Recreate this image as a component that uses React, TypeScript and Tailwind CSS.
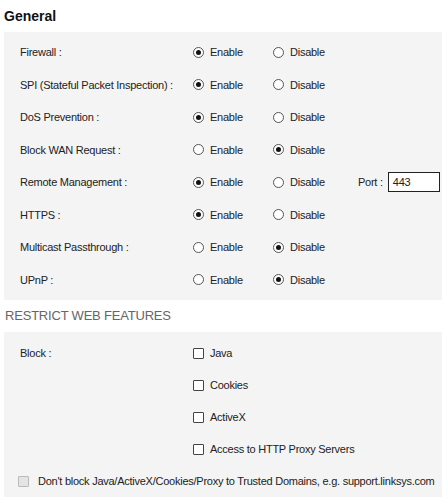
import React from "react";

type Row = { label: string; on: boolean; port?: string };

const rows: Row[] = [
  { label: "Firewall :", on: true },
  { label: "SPI (Stateful Packet Inspection) :", on: true },
  { label: "DoS Prevention :", on: true },
  { label: "Block WAN Request :", on: false },
  { label: "Remote Management :", on: true, port: "443" },
  { label: "HTTPS :", on: true },
  { label: "Multicast Passthrough :", on: false },
  { label: "UPnP :", on: false },
];

const Radio = ({ checked }: { checked: boolean }) => (
  <span className="w-[11px] h-[11px] rounded-full border border-[#555] bg-white flex items-center justify-center shrink-0">
    {checked && <span className="w-[5px] h-[5px] rounded-full bg-[#111]" />}
  </span>
);

const Check = ({ disabled }: { disabled?: boolean }) => (
  <span
    className={
      disabled
        ? "w-[11px] h-[11px] rounded-[1px] border border-[#bbb] bg-[#e4e4e4] shrink-0"
        : "w-[11px] h-[11px] rounded-[1px] border border-[#444] bg-white shrink-0"
    }
  />
);

export default function App() {
  return (
    <div className="w-[446px] h-[500px] bg-white text-[#222] text-[11px] tracking-[-0.25px] whitespace-nowrap overflow-hidden" style={{ fontFamily: '"Liberation Sans", Arial, sans-serif' }}>
      <h1 className="px-1 h-8 flex items-center text-[14px] font-bold tracking-normal text-[#111]">General</h1>

      {/* radio settings */}
      <div className="mx-1 w-[438px] bg-[#f4f4f4] py-1">
        {rows.map((r) => (
          <div key={r.label} className="h-[32.5px] flex items-center pl-4">
            <span className="w-[173px] shrink-0">{r.label}</span>
            <label className="w-[80px] flex items-center gap-[6px]">
              <Radio checked={r.on} />
              Enable
            </label>
            <label className="w-[85px] flex items-center gap-[6px]">
              <Radio checked={!r.on} />
              Disable
            </label>
            {r.port && (
              <div className="flex items-center gap-[5px]">
                <span>Port :</span>
                <span className="w-[52px] h-[20px] border border-[#222] bg-white flex items-center pl-[4px]">{r.port}</span>
              </div>
            )}
          </div>
        ))}
      </div>

      <h2 className="h-8 flex items-center px-[5px] text-[13px] tracking-[-0.2px] text-[#666]">RESTRICT WEB FEATURES</h2>

      {/* web features */}
      <div className="mx-1 w-[438px] bg-[#f4f4f4] pt-[5px]">
        {["Java", "Cookies", "ActiveX", "Access to HTTP Proxy Servers"].map((item, i) => (
          <div key={item} className="h-8 flex items-center pl-4">
            <span className="w-[173px] shrink-0">{i === 0 ? "Block :" : ""}</span>
            <label className="flex items-center gap-[6px]">
              <Check />
              {item}
            </label>
          </div>
        ))}
        <div className="h-8 flex items-center pl-[14px] gap-[9px]">
          <Check disabled />
          <span>Don't block Java/ActiveX/Cookies/Proxy to Trusted Domains, e.g. support.linksys.com</span>
        </div>
      </div>
    </div>
  );
}
